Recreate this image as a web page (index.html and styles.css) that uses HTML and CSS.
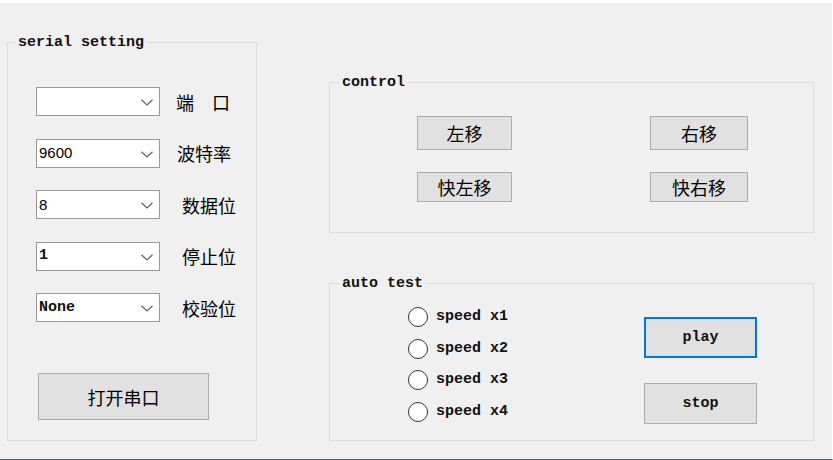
FILE: index.html
```html
<!DOCTYPE html>
<html lang="zh-CN">
<head>
<meta charset="utf-8">
<title>serial</title>
<link rel="stylesheet" href="styles.css">
</head>
<body>
<div class="window">
  <fieldset class="group group-serial">
    <legend class="group-title title-serial">serial setting</legend>
    <div class="serial-body">
      <div class="serial-rows">
        <div class="row">
          <div class="combo"><span class="combo-value"></span><svg class="chev" width="12" height="7" viewBox="0 0 12 7"><polyline points="0.5,0.8 6,6 11.5,0.8" fill="none" stroke="#606060" stroke-width="1.2"/></svg></div>
          <span class="lbl lbl-port">端　口</span>
        </div>
        <div class="row">
          <div class="combo"><span class="combo-value">9600</span><svg class="chev" width="12" height="7" viewBox="0 0 12 7"><polyline points="0.5,0.8 6,6 11.5,0.8" fill="none" stroke="#606060" stroke-width="1.2"/></svg></div>
          <span class="lbl lbl-baud">波特率</span>
        </div>
        <div class="row">
          <div class="combo"><span class="combo-value">8</span><svg class="chev" width="12" height="7" viewBox="0 0 12 7"><polyline points="0.5,0.8 6,6 11.5,0.8" fill="none" stroke="#606060" stroke-width="1.2"/></svg></div>
          <span class="lbl">数据位</span>
        </div>
        <div class="row">
          <div class="combo"><span class="combo-value mono">1</span><svg class="chev" width="12" height="7" viewBox="0 0 12 7"><polyline points="0.5,0.8 6,6 11.5,0.8" fill="none" stroke="#606060" stroke-width="1.2"/></svg></div>
          <span class="lbl">停止位</span>
        </div>
        <div class="row">
          <div class="combo"><span class="combo-value mono">None</span><svg class="chev" width="12" height="7" viewBox="0 0 12 7"><polyline points="0.5,0.8 6,6 11.5,0.8" fill="none" stroke="#606060" stroke-width="1.2"/></svg></div>
          <span class="lbl">校验位</span>
        </div>
      </div>
      <button class="btn btn-open">打开串口</button>
    </div>
  </fieldset>

  <div class="right-col">
    <fieldset class="group group-control">
      <legend class="group-title title-right">control</legend>
      <div class="control-grid">
        <button class="btn btn-move">左移</button>
        <button class="btn btn-move">右移</button>
        <button class="btn btn-fast">快左移</button>
        <button class="btn btn-fast">快右移</button>
      </div>
    </fieldset>

    <fieldset class="group group-auto">
      <legend class="group-title title-right">auto test</legend>
      <div class="auto-body">
        <div class="radios">
          <label class="radio"><span class="radio-circle"></span><span class="radio-text">speed x1</span></label>
          <label class="radio"><span class="radio-circle"></span><span class="radio-text">speed x2</span></label>
          <label class="radio"><span class="radio-circle"></span><span class="radio-text">speed x3</span></label>
          <label class="radio"><span class="radio-circle"></span><span class="radio-text">speed x4</span></label>
        </div>
        <div class="auto-btns">
          <button class="btn btn-play">play</button>
          <button class="btn btn-stop">stop</button>
        </div>
      </div>
    </fieldset>
  </div>
</div>
</body>
</html>
```

FILE: styles.css
```css
html, body {
  margin: 0;
  padding: 0;
}

body {
  width: 833px;
  height: 460px;
  overflow: hidden;
  background: #f0f0f0;
}

.window {
  box-sizing: border-box;
  width: 833px;
  height: 460px;
  background: #f0f0f0;
  border-top: 3px solid #fcfcfc;
  border-right: 1px solid #ffffff;
  border-bottom: 1px solid #0078d7;
  padding: 0 18px 18px 7px;
  display: flex;
  align-items: flex-end;
}

.group {
  box-sizing: border-box;
  margin: 0;
  padding: 0;
  border: 1px solid #dcdcdc;
  min-width: 0;
}

.group-title {
  font: bold 15px/17px "Liberation Mono", monospace;
  color: #111;
  padding: 0 3px;
  margin-bottom: 0;
}

.title-serial {
  margin-left: 7px;
}

.title-right {
  margin-left: 9px;
}

/* serial setting */
.group-serial {
  width: 250px;
  height: 407px;
}

.serial-body {
  padding: 36px 0 0 28px;
  display: flex;
  flex-direction: column;
  align-items: flex-start;
}

.serial-rows {
  display: flex;
  flex-direction: column;
  gap: 22.5px;
}

.row {
  display: flex;
  align-items: center;
  height: 29px;
}

.combo {
  box-sizing: border-box;
  width: 124px;
  height: 29px;
  background: #ffffff;
  border: 1px solid #999999;
  display: flex;
  align-items: center;
  justify-content: space-between;
  padding: 0 6px 0 2px;
}

.combo-value {
  font: 15px/20px "Liberation Sans", Arial, sans-serif;
  color: #000;
}

.combo-value.mono {
  font: bold 15px/20px "Liberation Mono", monospace;
  color: #111;
}

.chev {
  display: block;
  margin-top: 2px;
}

.lbl {
  font: 18px/24px "Noto Sans CJK SC", sans-serif;
  color: #000;
  margin-left: 22px;
}

.lbl-port {
  margin-left: 16px;
}

.lbl-baud {
  margin-left: 17px;
}

.btn {
  box-sizing: border-box;
  margin: 0;
  padding: 0;
  background: #e1e1e1;
  border: 1px solid #adadad;
  color: #000;
  font: 18px/24px "Noto Sans CJK SC", sans-serif;
}

.btn-open {
  width: 171px;
  height: 47px;
  margin: 51px 0 0 2px;
}

/* right column */
.right-col {
  width: 485px;
  margin-left: 72px;
  display: flex;
  flex-direction: column;
  gap: 42px;
}

.group-control {
  height: 159px;
}

.control-grid {
  display: grid;
  grid-template-columns: 95px 98px;
  column-gap: 138px;
  row-gap: 22px;
  padding: 25px 0 0 87px;
}

.btn-move {
  height: 34px;
}

.btn-fast {
  height: 30px;
}

.group-auto {
  height: 166px;
}

.auto-body {
  display: flex;
}

.radios {
  display: flex;
  flex-direction: column;
  gap: 11.7px;
  padding: 15px 0 0 78px;
}

.radio {
  display: flex;
  align-items: center;
  height: 20px;
}

.radio-circle {
  box-sizing: border-box;
  width: 20px;
  height: 20px;
  border: 1.5px solid #333333;
  border-radius: 50%;
  background: #ffffff;
}

.radio-text {
  font: bold 15px/20px "Liberation Mono", monospace;
  color: #111;
  margin-left: 8px;
}

.auto-btns {
  margin-left: auto;
  margin-right: 56px;
  padding-top: 25px;
  display: flex;
  flex-direction: column;
  gap: 25px;
}

.btn-play,
.btn-stop {
  width: 113px;
  height: 41px;
  font: bold 15px/20px "Liberation Mono", monospace;
  color: #111;
}

.btn-play {
  border: 2px solid #0078d7;
}
```
